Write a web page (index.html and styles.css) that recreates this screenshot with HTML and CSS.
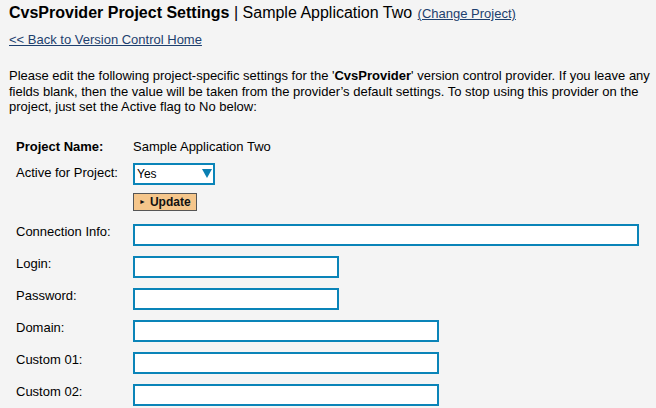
FILE: index.html
```html
<!DOCTYPE html>
<html>
<head>
<meta charset="utf-8">
<link rel="stylesheet" href="styles.css">
</head>
<body>
<div class="page">
  <div class="title">
    <span class="title-main">CvsProvider Project Settings</span>
    <span class="title-sub">| Sample Application Two</span>
    <a class="change" href="#">(Change Project)</a>
  </div>
  <div class="back"><a href="#">&lt;&lt; Back to Version Control Home</a></div>
  <p class="intro">Please edit the following project-specific settings for the '<b>CvsProvider</b>' version control provider. If you leave any fields blank, then the value will be taken from the provider’s default settings. To stop using this provider on the project, just set the Active flag to No below:</p>

  <div class="form">
    <div class="row row-name">
      <div class="label strong">Project Name:</div>
      <div class="value">Sample Application Two</div>
    </div>
    <div class="row row-active">
      <div class="label pad">Active for Project:</div>
      <div class="value">
        <div class="select-wrap">
          <select class="select"><option>Yes</option><option>No</option></select>
          <svg class="arrow" width="10" height="9" viewBox="0 0 10 9"><path d="M0 0H10L5 9Z" fill="#0a7fb2"/></svg>
        </div>
      </div>
    </div>
    <div class="row row-update">
      <div class="label"></div>
      <div class="value"><button class="btn"><span class="tri">&#9658;</span>Update</button></div>
    </div>
    <div class="row">
      <div class="label">Connection Info:</div>
      <div class="value"><input class="field w-xl" type="text"></div>
    </div>
    <div class="row">
      <div class="label">Login:</div>
      <div class="value"><input class="field w-sm" type="text"></div>
    </div>
    <div class="row">
      <div class="label">Password:</div>
      <div class="value"><input class="field w-sm" type="password"></div>
    </div>
    <div class="row">
      <div class="label">Domain:</div>
      <div class="value"><input class="field w-md" type="text"></div>
    </div>
    <div class="row">
      <div class="label">Custom 01:</div>
      <div class="value"><input class="field w-md" type="text"></div>
    </div>
    <div class="row">
      <div class="label">Custom 02:</div>
      <div class="value"><input class="field w-md" type="text"></div>
    </div>
  </div>
</div>
</body>
</html>
```

FILE: styles.css
```css
html, body {
  margin: 0;
  padding: 0;
  background: #f4f4f4;
  font-family: "Liberation Sans", Arial, sans-serif;
  color: #000;
  overflow: hidden;
}
.page {
  padding: 3px 4px 0 9px;
}
.title {
  font-size: 16px;
  line-height: 20px;
  white-space: nowrap;
}
.title-main {
  font-weight: bold;
}
.change {
  font-size: 13px;
  margin-left: 1px;
  color: #1d3f6e;
}
a {
  color: #1d3f6e;
}
.back {
  font-size: 13px;
  line-height: 16px;
  margin-top: 8px;
}
.intro {
  font-size: 13px;
  line-height: 15.5px;
  margin: 20px 0 0 0;
}
.form {
  margin-top: 24px;
  padding-left: 7px;
  font-size: 13px;
}
.row {
  display: flex;
  align-items: flex-start;
  margin-bottom: 10px;
}
.row-name { margin-bottom: 8px; line-height: 16px; }
.row-active { margin-bottom: 8px; }
.row-update { margin-bottom: 13px; }
.label {
  width: 117px;
  flex: none;
  line-height: 16px;
}
.label.pad { padding-top: 2px; }
.strong { font-weight: bold; }
.value { line-height: 16px; }
.select-wrap {
  position: relative;
  width: 82px;
  height: 22px;
}
.select {
  appearance: none;
  -webkit-appearance: none;
  box-sizing: border-box;
  width: 82px;
  height: 22px;
  border: 2px solid #0a84b8;
  background: #fff;
  font-family: "Liberation Sans", Arial, sans-serif;
  font-size: 12px;
  padding: 0 0 0 2px;
  margin: 0;
  color: #000;
  border-radius: 0;
  outline: none;
}
.arrow {
  position: absolute;
  left: 69px;
  top: 6px;
}
.btn {
  box-sizing: border-box;
  height: 18px;
  width: 64px;
  margin: 0;
  padding: 0 0 0 5px;
  background: #f5c68b;
  border: 1px solid #555;
  border-radius: 0;
  font-family: "Liberation Sans", Arial, sans-serif;
  font-size: 12px;
  font-weight: bold;
  color: #111;
  text-align: left;
  line-height: 16px;
}
.tri {
  font-size: 7px;
  margin-right: 4px;
  vertical-align: 2px;
}
.field {
  box-sizing: border-box;
  height: 22px;
  margin: 0;
  border: 2px solid #0a84b8;
  background: #fff;
  border-radius: 0;
  padding: 0 3px;
  display: block;
  outline: none;
}
.w-xl { width: 506px; }
.w-md { width: 306px; }
.w-sm { width: 206px; }
```
